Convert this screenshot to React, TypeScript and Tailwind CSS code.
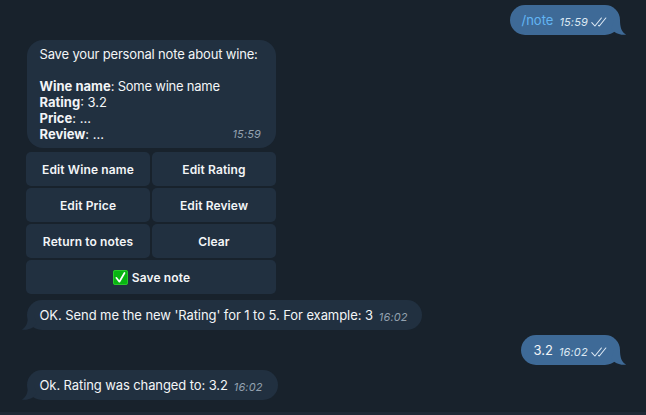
import type { ReactNode } from "react";

function Tail({ side }: { side: "left" | "right" }) {
  return (
    <svg
      className={
        side === "right"
          ? "absolute -right-[6px] bottom-0 h-[15px] w-[16px] text-[#3e6a97]"
          : "absolute -left-[5px] bottom-0 h-[15px] w-[16px] -scale-x-100 text-[#213040]"
      }
      viewBox="0 0 16 15"
      fill="currentColor"
    >
      <path d="M10 0C10 7 11.5 12 15.6 14.2C16 14.5 15.8 14.8 15.2 14.8C11 15 7.5 14 4.5 12L1 9L4 0Z" />
    </svg>
  );
}

function Checks() {
  return (
    <svg
      className="ml-[3px] h-[10px] w-[16px]"
      viewBox="0 0 16 10"
      fill="none"
      stroke="currentColor"
      strokeWidth="1.1"
      strokeLinecap="round"
      strokeLinejoin="round"
    >
      <path d="M0.8 5.6L3.9 9L10.4 1M7.5 8.3L8.3 9L14.8 1" />
    </svg>
  );
}

function Bubble({
  className,
  time,
  own,
  children,
}: {
  className: string;
  time: string;
  own?: boolean;
  children: ReactNode;
}) {
  return (
    <div
      className={`relative flex h-[30px] items-center rounded-[15px] whitespace-nowrap ${
        own ? "mr-[26px] self-end bg-[#3e6a97]" : "ml-[26.5px] bg-[#213040]"
      } ${className}`}
    >
      <Tail side={own ? "right" : "left"} />
      <span className="relative">{children}</span>
      <span
        className={`relative mt-[3px] ml-[6px] flex items-center text-[11px] tracking-[0.15px] italic ${
          own ? "text-[#dce8f3]" : "text-[#93a1af]"
        }`}
      >
        {time}
        {own && <Checks />}
      </span>
    </div>
  );
}

function Key({ label, wide }: { label: string; wide?: boolean }) {
  return (
    <button
      className={`flex h-[34px] items-center justify-center rounded-[5px] bg-[#213040] pt-px text-[12px] font-semibold tracking-[0.12px] ${
        wide ? "col-span-2 pl-px" : ""
      }`}
    >
      {wide && (
        <svg className="mr-[4px] h-[15px] w-[15px]" viewBox="0 0 15 15">
          <rect width="15" height="15" rx="2" fill="#08b512" />
          <rect x="0.5" y="0.5" width="14" height="14" rx="1.6" fill="none" stroke="#35ce35" strokeWidth="0.8" />
          <path
            d="M3.3 7.8L6.4 11.7L11.5 3"
            fill="none"
            stroke="#fff"
            strokeWidth="1.7"
            strokeLinecap="round"
            strokeLinejoin="round"
          />
        </svg>
      )}
      {label}
    </button>
  );
}

export default function App() {
  return (
    <main className="flex h-[415px] w-[646px] flex-col items-start overflow-hidden bg-[#18222c] pt-[5px] font-['Inter',sans-serif] text-[13px] leading-[16px] text-[#f3f5f7]">
      <Bubble own time="15:59" className="w-[110.5px] pl-[12px]">
        <span className="text-[#62b5f4]">/note</span>
      </Bubble>

      <section className="mt-[4.5px] ml-[26.5px] flex h-[108px] w-[249.5px] items-end justify-between rounded-[16px] bg-[#213040] pr-[15px] pb-[5.6px] pl-[13px]">
        <div className="whitespace-nowrap">
          <p className="tracking-[-0.165px]">Save your personal note about wine:</p>
          <p className="mt-4">
            <b>Wine name</b>
            <span className="tracking-[-0.23px]">: Some wine name</span>
          </p>
          <p>
            <b>Rating</b>: 3.2
          </p>
          <p>
            <b>Price</b>: ...
          </p>
          <p>
            <b>Review</b>: ...
          </p>
        </div>
        <time className="-ml-10 text-[11px] tracking-[0.15px] text-[#93a1af] italic">15:59</time>
      </section>

      <div className="mt-[4.5px] ml-[26px] grid w-[250px] grid-cols-2 gap-[2px]">
        <Key label="Edit Wine name" />
        <Key label="Edit Rating" />
        <Key label="Edit Price" />
        <Key label="Edit Review" />
        <Key label="Return to notes" />
        <Key label="Clear" />
        <Key label="Save note" wide />
      </div>

      <Bubble time="16:02" className="mt-[6px] w-[395.5px] pl-[13px]">
        <span className="tracking-[-0.075px]">OK. Send me the new 'Rating' for 1 to 5. For example: 3</span>
      </Bubble>
      <Bubble own time="16:02" className="mt-[5px] w-[99px] pl-[12.5px]">
        3.2
      </Bubble>
      <Bubble time="16:02" className="mt-[5px] w-[251px] pl-[13px]">
        <span className="tracking-[-0.1px]">Ok. Rating was changed to: 3.2</span>
      </Bubble>
      <div className="mt-auto h-[3px] w-full bg-[#1e2936]" />
    </main>
  );
}
